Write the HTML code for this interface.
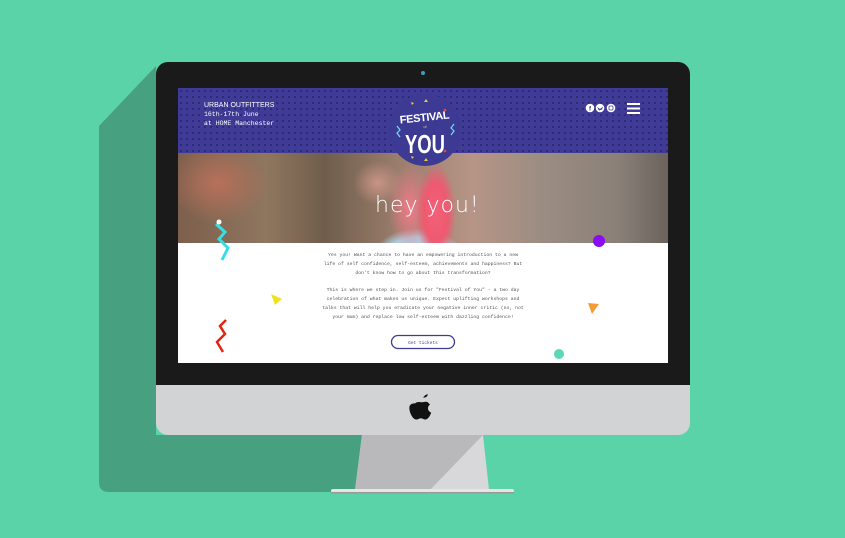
<!DOCTYPE html>
<html><head><meta charset="utf-8"><style>
*{margin:0;padding:0;box-sizing:border-box}
body{width:845px;height:538px;background:#5bd3a8;position:relative;overflow:hidden;font-family:"Liberation Mono",monospace}
.abs{position:absolute}
#frame{left:156px;top:62px;width:534px;height:324px;background:#1a1a1a;border-radius:12px 12px 0 0}
#chin{left:156px;top:385px;width:534px;height:50px;background:#d2d3d5;border-radius:0 0 12px 12px}
#screen{left:178px;top:88px;width:490px;height:275px;background:#fff;overflow:hidden}
#hdr{left:0;top:0;width:490px;height:65px;background-color:#3f3b96;background-image:radial-gradient(circle,#2a2770 0.8px,transparent 1.2px);background-size:6px 6px}
#hero{left:0;top:65px;width:490px;height:90px;background:
 radial-gradient(ellipse 20px 50px at 258px 60px,#f2607a 0,#ee5a70 60%,transparent 100%),
 radial-gradient(ellipse 22px 45px at 232px 55px,#f07a88 0,transparent 100%),
 radial-gradient(ellipse 45px 30px at 240px 105px,#a9d3e6 0,#a9d3e6 70%,transparent 100%),
 radial-gradient(ellipse 25px 22px at 200px 30px,#c99486 0,transparent 100%),
 radial-gradient(ellipse 50px 40px at 40px 30px,#b8705a 0,transparent 100%),
 linear-gradient(90deg,#7c5f4c 0,#8f765f 18%,#6f5d4b 30%,#9a7d6d 45%,#b69586 60%,#9a8c82 75%,#8a8078 90%,#6a625c 100%)}
.t{color:#fff;font-size:6.5px;line-height:8.5px;position:absolute}
.body{color:#555;font-size:4.8px;line-height:9px;text-align:center;width:204px;left:143px;position:absolute}
</style></head><body>
<svg class="abs" style="left:0;top:0" width="845" height="538"><path d="M156 66 L99 126 L99 482 Q99 492 109 492 L355 492 L362 435 L156 435 Z" fill="#47a07f"/></svg>
<div id="frame" class="abs"></div>
<div class="abs" style="left:421px;top:71px;width:4px;height:4px;border-radius:50%;background:#3aa0c0"></div>
<div id="chin" class="abs"></div>
<svg class="abs" style="left:0;top:0" width="845" height="538">
<polygon points="362,435 483,435 489,490 355,490" fill="#d8d8da"/>
<polygon points="362,435 483,435 430,490 355,490" fill="#b9b9bb"/>
<rect x="331" y="489" width="183" height="4" rx="2" fill="#e6e6e6"/>
<rect x="331" y="492" width="183" height="1.5" fill="#999"/>
<g transform="translate(422 408) scale(1.15) translate(-422 -408)">
<path d="M423 399c1-2 3-3 4-3 0 2-2 3-4 3zM416 404c2-2 4-1 6-1 2 0 3-1 5 0 1 1 2 2 2 2-3 2-2 6 1 7-1 3-3 6-5 6-2 0-2-1-4-1s-2 1-4 1c-3 0-6-6-6-10 0-3 2-4 5-4z" fill="#111"/></g>
</svg>
<div id="screen" class="abs">
 <div id="hero" class="abs"></div>
 <div class="abs" style="left:197px;top:105px;font-family:'DejaVu Sans',sans-serif;font-weight:200;color:#fff;font-size:22px;letter-spacing:1px">hey you!</div>
 <div id="hdr" class="abs"></div>
 <div class="t" style="left:26px;top:14px;font-family:'Liberation Sans',sans-serif;font-size:7px">URBAN OUTFITTERS</div>
 <div class="t" style="left:26px;top:23px">16th-17th June<br>at HOME Manchester</div>
 <svg class="abs" style="left:0;top:0" width="490" height="275">
  <circle cx="247" cy="42" r="36" fill="#3d3a94"/>
  <text x="247" y="33" fill="#fff" font-family="Liberation Sans" font-weight="bold" font-size="11" text-anchor="middle" transform="rotate(-6 247 33)" textLength="50">FESTIVAL</text>
  <text x="247" y="40" fill="#f4c53a" font-family="Liberation Sans" font-size="4" text-anchor="middle">of</text>
  <text x="247" y="65" fill="#fff" font-family="Liberation Sans" font-weight="bold" font-size="26" text-anchor="middle" textLength="40" lengthAdjust="spacingAndGlyphs">YOU</text>
  <path d="M219 38l3 4-3 3 3 4" stroke="#6fe0f0" fill="none" stroke-width="1.2"/>
  <path d="M276 36l-3 4 3 3-3 4" stroke="#6fe0f0" fill="none" stroke-width="1.2"/>
  <polygon points="248,11 250,14 246,14" fill="#f4c53a"/><polygon points="248,70 250,73 246,73" fill="#f4c53a"/>
  <polygon points="233,14 236,15 234,17" fill="#f4c53a"/><polygon points="233,68 236,69 234,71" fill="#f4c53a"/>
  <circle cx="267" cy="22" r="1.3" fill="#e8463a"/><circle cx="267" cy="63" r="1.3" fill="#e8463a"/>
  <circle cx="412" cy="20" r="4.3" fill="#fff"/><circle cx="422" cy="20" r="4.3" fill="#fff"/><circle cx="433" cy="20" r="4.3" fill="#fff"/>
  <text x="412" y="22.5" font-size="6" font-family="Liberation Sans" font-weight="bold" fill="#3f3b96" text-anchor="middle">f</text>
  <rect x="431" y="18" width="4" height="4" rx="1" fill="none" stroke="#3f3b96" stroke-width="0.8"/>
  <path d="M419 19l3 2 3-2.5-1 3-3 1z" fill="#3f3b96"/>
  <rect x="449" y="15" width="13" height="2" fill="#fff"/><rect x="449" y="19.5" width="13" height="2" fill="#fff"/><rect x="449" y="24" width="13" height="2" fill="#fff"/>
  <path d="M38 136l9 8-6 7 9 9-6 12" stroke="#36dfe6" stroke-width="3" fill="none"/>
  <circle cx="41" cy="134" r="2.5" fill="#fff"/>
  <polygon points="93,206 104,211 97,217" fill="#f2e21a"/>
  <path d="M48 232l-6 6 5 8-8 8 6 10" stroke="#e2250f" stroke-width="2.5" fill="none"/>
  <circle cx="421" cy="153" r="6" fill="#8a0cf0"/>
  <polygon points="410,215 421,216 414,226" fill="#f39b34"/>
  <circle cx="381" cy="266" r="5" fill="#5bd8b6"/>
  <rect x="213.5" y="247.5" width="63" height="13" rx="6.5" fill="none" stroke="#3f3b96" stroke-width="1.3"/>
  <text x="245" y="256" font-family="Liberation Mono" font-size="4.5" fill="#3f3b96" text-anchor="middle">Get tickets</text>
 </svg>
 <div class="body" style="top:163px">Yes you! Want a chance to have an empowering introduction to a new life of self confidence, self-esteem, achievements and happiness? But don't know how to go about this transformation?</div>
 <div class="body" style="top:198px">This is where we step in. Join us for "Festival of You" - a two day celebration of what makes us unique. Expect uplifting workshops and talks that will help you eradicate your negative inner critic (no, not your mum) and replace low self-esteem with dazzling confidence!</div>
</div>
</body></html>
